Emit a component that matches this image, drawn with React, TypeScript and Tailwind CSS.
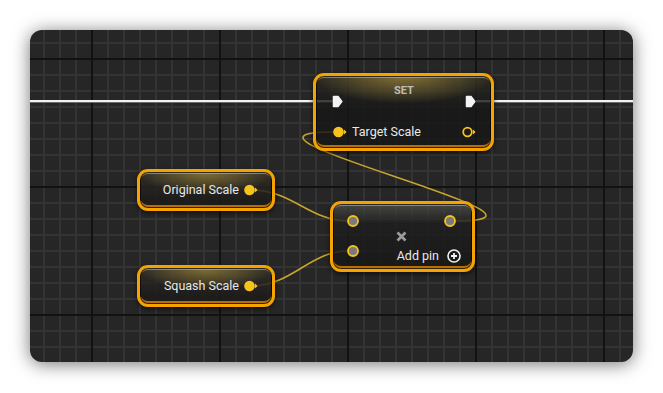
import React from "react";

const PIN_YELLOW = "#f6c21c";
const WIRE = "#c9a42a";

const nodeBase =
  "absolute rounded-[11px] border-[3px] border-[#f4a300] shadow-[inset_0_0_0_1px_rgba(0,0,0,0.7),inset_0_2px_0_rgba(190,190,180,0.55),inset_0_-3px_0_#b86e00,0_2px_5px_rgba(0,0,0,0.6)]";

const glossy =
  "bg-[radial-gradient(ellipse_65%_75%_at_50%_0%,rgba(160,136,58,0.75),transparent_80%),linear-gradient(to_bottom,rgba(48,45,38,0.85),rgba(22,22,22,0.85))]";

function ExecPin() {
  return (
    <svg width="11" height="13" viewBox="0 0 11 13">
      <path d="M1.5 1.5 H6 L9.8 6.5 L6 11.5 H1.5 Z" fill="#f4f4f4" stroke="#f4f4f4" strokeWidth="1.5" strokeLinejoin="round" />
    </svg>
  );
}

// filled or hollow data pin with the little arrow on its right
function DataPin({ hollow = false }: { hollow?: boolean }) {
  return (
    <svg width="14" height="12" viewBox="0 0 14 12">
      {hollow ? (
        <circle cx="5.5" cy="6" r="4.3" fill="#1a1a1a" stroke={PIN_YELLOW} strokeWidth="1.8" />
      ) : (
        <circle cx="5.5" cy="6" r="5.3" fill={PIN_YELLOW} />
      )}
      <path d="M11 3.5 L13.6 6 L11 8.5 Z" fill={PIN_YELLOW} />
    </svg>
  );
}

function GrayPin() {
  return (
    <svg width="12" height="12" viewBox="0 0 12 12">
      <circle cx="6" cy="6" r="5" fill="#7a7a7a" stroke={PIN_YELLOW} strokeWidth="1.8" />
    </svg>
  );
}

function ScaleNode({ label, top }: { label: string; top: string }) {
  return (
    <div className={`${nodeBase} ${glossy} left-[107px] ${top} w-[138px] h-[42px] flex items-center justify-end gap-[5px] pr-[14px]`}>
      <span className="text-[12.5px] leading-[16px] text-[#e8e8e8]">{label}</span>
      <DataPin />
    </div>
  );
}

export default function App() {
  return (
    <div className="w-[663px] h-[393px] bg-white p-[30px] font-['Roboto','Liberation_Sans',sans-serif]">
      <div className="relative w-[603px] h-[332px] rounded-[12px] overflow-hidden bg-[#262626] shadow-[0_2px_18px_rgba(0,0,0,0.55)] [background-image:linear-gradient(to_right,#121212_2px,transparent_2px),linear-gradient(to_bottom,#121212_2px,transparent_2px),linear-gradient(to_right,#343434_2px,transparent_2px),linear-gradient(to_bottom,#343434_2px,transparent_2px)] [background-size:128px_128px,128px_128px,16px_16px,16px_16px] [background-position:61px_0,0_28px,13px_0,0_12px]">
        {/* wires */}
        <svg className="absolute inset-0" width="603" height="332" viewBox="0 0 603 332">
          <line x1="0" y1="71" x2="303" y2="71" stroke="#f2f2f2" strokeWidth="2" />
          <line x1="0" y1="72.5" x2="303" y2="72.5" stroke="#6a6a6a" strokeWidth="1" />
          <line x1="446" y1="71" x2="603" y2="71" stroke="#f2f2f2" strokeWidth="2" />
          <line x1="446" y1="72.5" x2="603" y2="72.5" stroke="#6a6a6a" strokeWidth="1" />
          <path d="M221 160 C 262 160, 280 191, 318 191" fill="none" stroke={WIRE} strokeWidth="1.6" />
          <path d="M221 256 C 262 256, 280 221, 318 221" fill="none" stroke={WIRE} strokeWidth="1.6" />
          <path d="M426 191 C 566 191, 163 102, 303 102" fill="none" stroke={WIRE} strokeWidth="1.6" />
        </svg>

        {/* SET node */}
        <div className={`${nodeBase} left-[283px] top-[43px] w-[181px] h-[78px] flex flex-col bg-[radial-gradient(ellipse_60%_45%_at_50%_0%,rgba(160,136,58,0.75),transparent_85%),linear-gradient(to_bottom,rgba(44,42,34,0.82),rgba(22,22,22,0.82)_45%,rgba(22,22,22,0.82))]`}>
          <div className="grid grid-cols-[auto_1fr_auto] h-[32px] pl-[16px] pr-[15px]">
            <div className="self-end">
              <ExecPin />
            </div>
            <div className="self-start pt-[8px] text-center text-[11px] leading-[14px] font-bold text-[#bdbdbd]">SET</div>
            <div className="self-end">
              <ExecPin />
            </div>
          </div>
          <div className="flex items-center h-[16px] mt-[16px] pl-[17px] pr-[15px]">
            <DataPin />
            <span className="ml-[5px] text-[12.5px] leading-[16px] text-[#e8e8e8]">Target Scale</span>
            <div className="ml-auto">
              <DataPin hollow />
            </div>
          </div>
        </div>

        <ScaleNode label="Original Scale" top="top-[139px]" />
        <ScaleNode label="Squash Scale" top="top-[235px]" />

        {/* Add node */}
        <div className={`${nodeBase} left-[300px] top-[171px] w-[145px] h-[71px] flex flex-col pt-[11px] bg-[linear-gradient(to_bottom,rgba(82,82,76,0.75),rgba(30,30,30,0.85)_30%,rgba(22,22,22,0.85))]`}>
          <div className="flex justify-between h-[12px] pl-[14px] pr-[16px]">
            <GrayPin />
            <GrayPin />
          </div>
          <div className="flex items-center justify-center h-[18px] pr-[3px]">
            <svg width="11" height="11" viewBox="0 0 11 11">
              <path d="M1.5 1.5 L9.5 9.5 M9.5 1.5 L1.5 9.5" stroke="#9c9c9c" strokeWidth="2.6" strokeLinecap="butt" />
            </svg>
          </div>
          <div className="flex items-start h-[12px] pl-[14px] pr-[11px]">
            <GrayPin />
            <div className="ml-auto mt-[4px] flex items-center gap-[8px]">
              <span className="text-[12.5px] leading-[14px] text-[#e8e8e8]">Add pin</span>
              <svg width="14" height="14" viewBox="0 0 14 14">
                <circle cx="7" cy="7" r="6" fill="none" stroke="#f0f0f0" strokeWidth="1.6" />
                <path d="M7 4 V10 M4 7 H10" stroke="#f0f0f0" strokeWidth="1.8" />
              </svg>
            </div>
          </div>
        </div>
      </div>
    </div>
  );
}
